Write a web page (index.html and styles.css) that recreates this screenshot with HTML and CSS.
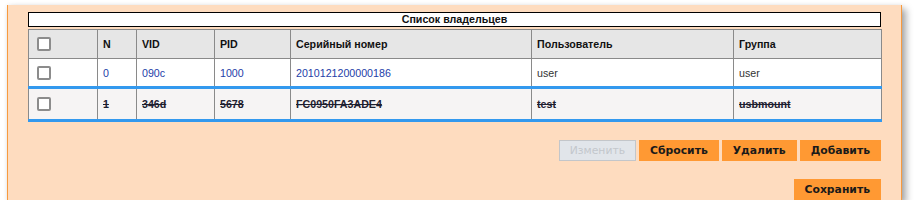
FILE: index.html
```html
<!DOCTYPE html>
<html>
<head>
<meta charset="utf-8">
<link rel="stylesheet" href="styles.css">
</head>
<body>
<div class="panel">
  <div class="title">Список владельцев</div>
  <table class="owners">
    <colgroup>
      <col class="c-chk"><col class="c-n"><col class="c-vid"><col class="c-pid"><col class="c-ser"><col class="c-user"><col class="c-grp">
    </colgroup>
    <thead>
      <tr>
        <th><span class="chk"></span></th>
        <th>N</th>
        <th>VID</th>
        <th>PID</th>
        <th>Серийный номер</th>
        <th>Пользователь</th>
        <th>Группа</th>
      </tr>
    </thead>
    <tbody>
      <tr class="row">
        <td><span class="chk"></span></td>
        <td class="id">0</td>
        <td class="id">090c</td>
        <td class="id">1000</td>
        <td class="id">2010121200000186</td>
        <td>user</td>
        <td>user</td>
      </tr>
      <tr class="row deleted">
        <td><span class="chk"></span></td>
        <td>1</td>
        <td>346d</td>
        <td>5678</td>
        <td>FC0950FA3ADE4</td>
        <td>test</td>
        <td>usbmount</td>
      </tr>
    </tbody>
  </table>
  <div class="actions">
    <button class="btn disabled" disabled>Изменить</button>
    <button class="btn">Сбросить</button>
    <button class="btn">Удалить</button>
    <button class="btn">Добавить</button>
  </div>
  <div class="actions save">
    <button class="btn">Сохранить</button>
  </div>
</div>
</body>
</html>
```
FILE: styles.css
```css
html, body {
  margin: 0;
  padding: 0;
  background: #ffffff;
}
body {
  padding: 5px 0 0 7px;
  font-family: "Liberation Sans", Arial, sans-serif;
}
.panel {
  width: 895px;
  height: 195px;
  box-sizing: border-box;
  background: #fedcbf;
  border-left: 1px solid #f79a3e;
  border-right: 1px solid #f79a3e;
  box-shadow: 4px 4px 7px rgba(0, 0, 0, 0.35), 0 0 4px rgba(0, 0, 0, 0.06);
  padding: 7px 20px 0 20px;
}
.title {
  background: #ffffff;
  border: 1px solid #000000;
  height: 13px;
  line-height: 13px;
  font-size: 10.67px;
  font-weight: bold;
  color: #111111;
  text-align: center;
  margin-bottom: 2px;
}
.owners {
  width: 853px;
  table-layout: fixed;
  border-collapse: collapse;
  font-size: 10.67px;
}
.c-chk { width: 69px; }
.c-n { width: 39px; }
.c-vid { width: 78px; }
.c-pid { width: 76px; }
.c-ser { width: 241px; }
.c-user { width: 202px; }
.c-grp { width: 148px; }
.owners th, .owners td {
  border: 1px solid #8a8a8a;
  height: 29px;
  padding: 0 0 0 5px;
  text-align: left;
  vertical-align: middle;
  box-sizing: border-box;
  white-space: nowrap;
}
.owners th {
  background: #e6e6e6;
  color: #111111;
  font-weight: bold;
}
.owners td {
  background: #ffffff;
  color: #333333;
}
.owners th:first-child, .owners td:first-child {
  padding-left: 8px;
}
.owners td.id {
  color: #2340a8;
}
.owners tr.deleted td {
  background: #f6f4f4;
  border-top: 3px solid #3399ee;
  border-bottom: 3px solid #3399ee;
  font-weight: bold;
  text-decoration: line-through;
  color: #1e2030;
  height: 33px;
}
.chk {
  display: block;
  width: 14px;
  height: 14px;
  box-sizing: border-box;
  border: 2px solid #8c8c8c;
  border-radius: 2px;
  background: #ffffff;
}
.actions {
  display: flex;
  justify-content: flex-end;
  gap: 3px;
  margin-top: 18px;
  width: 853px;
}
.actions.save {
  margin-top: 18px;
}
.btn {
  height: 21px;
  padding: 0 11px;
  border: none;
  background: #ff9933;
  color: #1a1a1a;
  font-family: "DejaVu Sans", Verdana, sans-serif;
  font-size: 10.8px;
  font-weight: bold;
  margin: 0;
}
.btn.disabled {
  background: #e1e5ea;
  border: 1px solid #c3c6ca;
  color: #c3c7cc;
  font-weight: normal;
  padding: 0 10px;
}
```
